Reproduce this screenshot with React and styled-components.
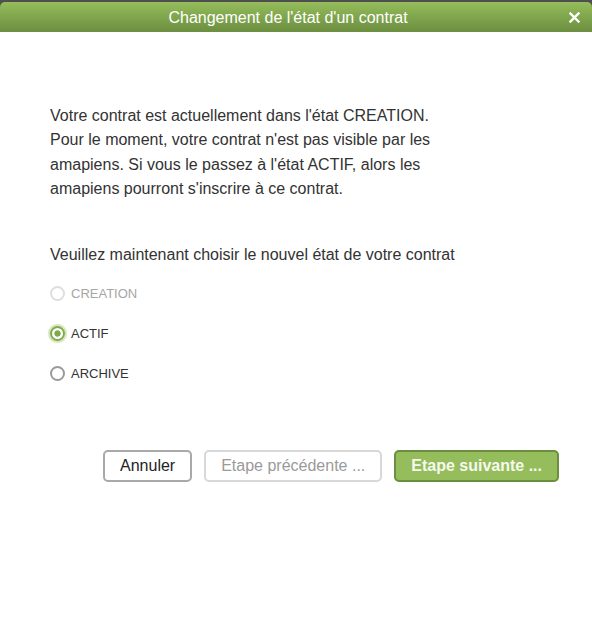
import React from 'react';
import styled, { createGlobalStyle } from 'styled-components';

const GlobalStyle = createGlobalStyle`
	html, body {
		margin: 0;
		padding: 0;
		background: #ffffff;
	}
	body {
		font-family: "Liberation Sans", Arial, sans-serif;
	}
`;

const choices = [
	{ label: 'CREATION', disabled: true },
	{ label: 'ACTIF', checked: true },
	{ label: 'ARCHIVE' },
];

function App() {
	return (
		<Window>
			<GlobalStyle />
			<Header>
				<Title>Changement de l'état d'un contrat</Title>
				<Close aria-label="Fermer">
					<svg width="11" height="11" viewBox="0 0 11 11">
						<path d="M1.5 1.5 L9.5 9.5 M9.5 1.5 L1.5 9.5" stroke="#fff" strokeWidth="2.4" strokeLinecap="square" />
					</svg>
				</Close>
			</Header>
			<Body>
				<Paragraph>
					Votre contrat est actuellement dans l'état CREATION.<br />
					Pour le moment, votre contrat n'est pas visible par les<br />
					amapiens. Si vous le passez à l'état ACTIF, alors les<br />
					amapiens pourront s'inscrire à ce contrat.
				</Paragraph>
				<Question>Veuillez maintenant choisir le nouvel état de votre contrat</Question>
				<Choices>
					{choices.map((c) => (
						<Choice key={c.label} disabled={c.disabled}>
							<Radio checked={c.checked} disabled={c.disabled} />
							{c.label}
						</Choice>
					))}
				</Choices>
				<Actions>
					<Button>Annuler</Button>
					<Button disabled>Etape précédente ...</Button>
					<Button primary>Etape suivante ...</Button>
				</Actions>
			</Body>
		</Window>
	);
}

const Window = styled.div`
	min-height: 638px;
	background: linear-gradient(#4f4f4f 0, #4f4f4f 10px, #ffffff 10px);
	padding-top: 2px;
	box-sizing: border-box;
`;

const Header = styled.div`
	position: relative;
	height: 30px;
	padding-right: 16px;
	border-radius: 5px 5px 0 0;
	background: linear-gradient(#95bd5b, #6b8e40);
	display: flex;
	align-items: center;
	justify-content: center;
`;

const Title = styled.div`
	color: #ffffff;
	font-size: 16px;
	margin-top: 1px;
`;

const Close = styled.div`
	position: absolute;
	right: 12px;
	top: 10px;
	width: 11px;
	height: 11px;
	display: flex;
`;

const Body = styled.div`
	background: #ffffff;
	padding: 72px 33px 0 50px;
	color: #333333;
	font-size: 16px;
`;

const Paragraph = styled.p`
	margin: 0;
	line-height: 24.4px;
`;

const Question = styled.p`
	margin: 41px 0 0;
	line-height: 24px;
`;

const Choices = styled.div`
	margin-top: 7px;
	display: flex;
	flex-direction: column;
`;

const Choice = styled.label`
	height: 40px;
	display: flex;
	align-items: center;
	gap: 6px;
	font-size: 13px;
	color: ${(p) => (p.disabled ? '#a6a6a6' : '#333333')};
`;

const Radio = styled.span`
	width: 11px;
	height: 11px;
	border-radius: 50%;
	box-sizing: content-box;
	border: 2px solid ${(p) => (p.checked ? '#7faa47' : p.disabled ? '#dedede' : '#9a9a9a')};
	background: ${(p) => (p.checked ? 'radial-gradient(circle, #7faa47 0, #7faa47 2.8px, #ffffff 3.5px)' : '#ffffff')};
	box-shadow: ${(p) => (p.checked ? '0 0 1px 2px rgba(148, 189, 91, 0.4)' : 'none')};
`;

const Actions = styled.div`
	margin-top: 56px;
	display: flex;
	justify-content: flex-end;
	gap: 12px;
`;

const Button = styled.button`
	height: 32px;
	padding: 0 15px;
	border-radius: 5px;
	font-family: "Liberation Sans", Arial, sans-serif;
	font-size: 16px;
	font-weight: ${(p) => (p.primary ? 'bold' : 'normal')};
	border: 2px solid ${(p) => (p.primary ? '#6b8e40' : p.disabled ? '#d8d8d8' : '#a9a9a9')};
	background: ${(p) => (p.primary ? '#95bd5b' : '#ffffff')};
	color: ${(p) => (p.primary ? '#f6f9f0' : p.disabled ? '#9a9a9a' : '#222222')};
`;

export default App;
